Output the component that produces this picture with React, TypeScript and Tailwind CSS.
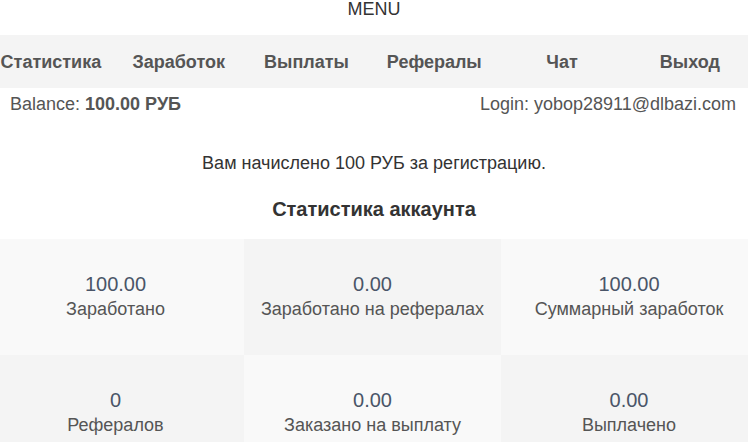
export default function App() {
  const nav = ["Статистика", "Заработок", "Выплаты", "Рефералы", "Чат", "Выход"];
  const stats = [
    { value: "100.00", label: "Заработано", bg: "bg-[#f9f9f9]" },
    { value: "0.00", label: "Заработано на рефералах", bg: "bg-[#f4f4f4]" },
    { value: "100.00", label: "Суммарный заработок", bg: "bg-[#f9f9f9]" },
    { value: "0", label: "Рефералов", bg: "bg-[#f4f4f4]" },
    { value: "0.00", label: "Заказано на выплату", bg: "bg-[#f9f9f9]" },
    { value: "0.00", label: "Выплачено", bg: "bg-[#f4f4f4]" },
  ];

  return (
    <div className="min-h-screen overflow-hidden bg-white font-['Liberation_Sans',Arial,sans-serif] text-[18px] text-[#555]">
      <div className="h-[35px] text-center leading-[19px] text-[#333]">MENU</div>

      <nav className="h-[53px] overflow-hidden bg-[#f4f4f4]">
        <ul className="ml-[-13px] flex h-full w-[767px] items-center pt-[2px]">
          {nav.map((item) => (
            <li key={item} className="w-[127.8px] shrink-0 text-center font-bold text-[#555]">
              {item}
            </li>
          ))}
        </ul>
      </nav>

      <div className="flex h-[32px] items-center justify-between pl-[10px] pr-[12px]">
        <span>
          Balance: <b>100.00 РУБ</b>
        </span>
        <span>Login: yobop28911@dlbazi.com</span>
      </div>

      <p className="mt-[33px] text-center leading-[20px] text-[#333]">Вам начислено 100 РУБ за регистрацию.</p>

      <h2 className="mt-[24px] text-center text-[20px] font-bold leading-[24px] text-[#333]">Статистика аккаунта</h2>

      <div className="mt-[18px] ml-[-13px] grid w-[770px] grid-cols-[257px_257px_256px]">
        {stats.map((s) => (
          <div key={s.label} className={`flex h-[116px] flex-col items-center justify-center pb-[2px] ${s.bg}`}>
            <div className="text-[20px] leading-[24px] text-[#4a5568]">{s.value}</div>
            <div className="pt-[1px] leading-[24px] text-[#555]">{s.label}</div>
          </div>
        ))}
      </div>
    </div>
  );
}
